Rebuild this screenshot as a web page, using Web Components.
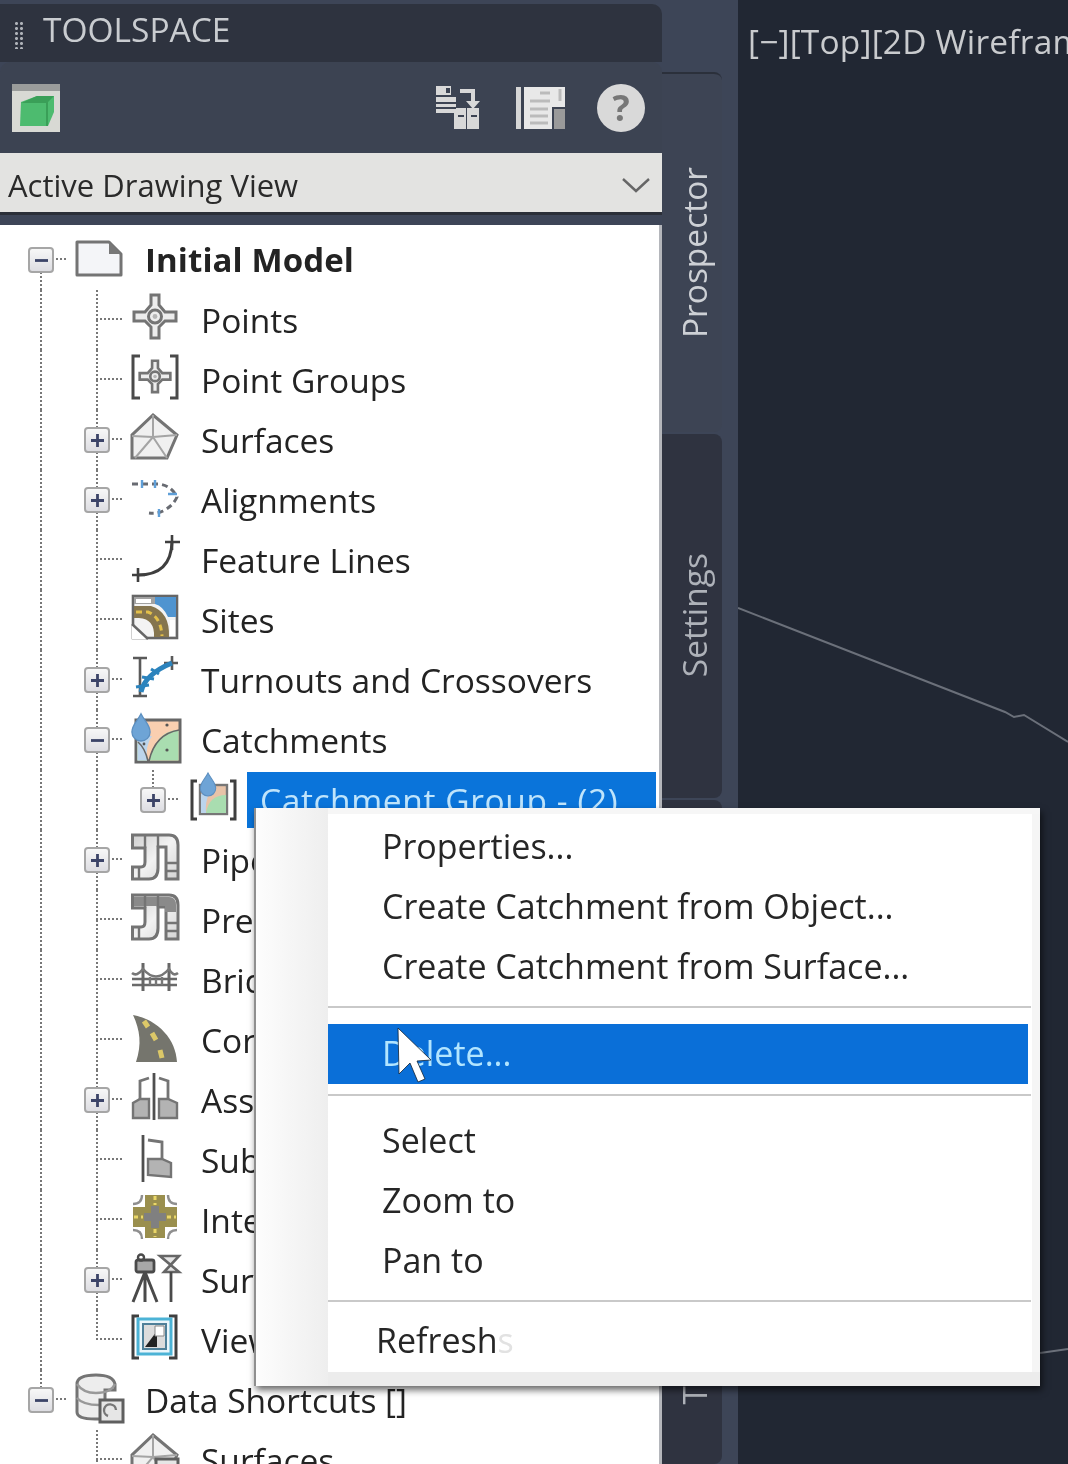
<!DOCTYPE html>
<html><head><meta charset="utf-8">
<style>
html,body{margin:0;padding:0;height:1464px;overflow:hidden;background:#212733}
body{font-family:"Open Sans","Noto Sans",sans-serif}
</style></head>
<body>
<app-shell>
  <tool-space slot="left">
    <space-title>TOOLSPACE</space-title>
    <space-toolbar></space-toolbar>
    <view-combo>Active Drawing View</view-combo>
    <project-tree>
      <tree-row cells="m-d" icon="doc" bold>Initial Model</tree-row>
      <tree-row cells="v b" icon="points">Points</tree-row>
      <tree-row cells="v b" icon="pgroups">Point Groups</tree-row>
      <tree-row cells="v p" icon="surface">Surfaces</tree-row>
      <tree-row cells="v p" icon="align">Alignments</tree-row>
      <tree-row cells="v b" icon="feature">Feature Lines</tree-row>
      <tree-row cells="v b" icon="sites">Sites</tree-row>
      <tree-row cells="v p" icon="turnout">Turnouts and Crossovers</tree-row>
      <tree-row cells="v m" icon="catch">Catchments</tree-row>
      <tree-row cells="v v p-u" icon="catchgroup" selected>Catchment Group - (2)</tree-row>
      <tree-row cells="v p" icon="pipe">Pipe Networks</tree-row>
      <tree-row cells="v b" icon="press">Pressure Networks</tree-row>
      <tree-row cells="v b" icon="bridge">Bridges</tree-row>
      <tree-row cells="v b" icon="corridor">Corridors</tree-row>
      <tree-row cells="v p" icon="assembly">Assemblies</tree-row>
      <tree-row cells="v b" icon="subassembly">Subassemblies</tree-row>
      <tree-row cells="v b" icon="intersect">Intersections</tree-row>
      <tree-row cells="v p" icon="survey">Survey</tree-row>
      <tree-row cells="v e" icon="viewframe">View Frame Groups</tree-row>
      <tree-row cells="m-u" icon="shortcut">Data Shortcuts []</tree-row>
      <tree-row cells="n b" icon="surfaceshort">Surfaces</tree-row>
    </project-tree>
  </tool-space>
  <side-tabs slot="tabs">
    <side-tab active pad="93" h="360">Prospector</side-tab>
    <side-tab pad="119" h="364">Settings</side-tab>
    <side-tab pad="586" h="664">T</side-tab>
  </side-tabs>
  <model-view slot="view">[−][Top][2D Wireframe]</model-view>
  <context-menu slot="over">
    <menu-item>Properties...</menu-item>
    <menu-item>Create Catchment from Object...</menu-item>
    <menu-item>Create Catchment from Surface...</menu-item>
    <menu-sep></menu-sep>
    <menu-item active>Delete...</menu-item>
    <menu-sep short></menu-sep>
    <menu-item>Select</menu-item>
    <menu-item>Zoom to</menu-item>
    <menu-item>Pan to</menu-item>
    <menu-sep></menu-sep>
    <menu-item tight>Refresh<span style="color:#e2e2e2">s</span></menu-item>
  </context-menu>
  <mouse-cursor slot="over"></mouse-cursor>
</app-shell>

<script>
const G='#747474', D='#3f3f3f';
const bracket=(c='#4a4a4a')=>`<path d="M9 4H2V46H9M39 4H46V46H39" fill="none" stroke="${c}" stroke-width="3"/>`;
const target=(t='',w=3)=>`<g ${t}><path d="M20 3H28V13L34 20H45V29H34L28 35V46H20V35L14 29H3V20H14L20 13Z" fill="#ededed" stroke="${G}" stroke-width="${w}"/><circle cx="24" cy="24.5" r="6.5" fill="none" stroke="${G}" stroke-width="${w}"/><circle cx="24" cy="24.5" r="2.4" fill="#b5b5b5"/></g>`;
const pent=`<path d="M22 3L46 23L36 46H1V23Z" fill="#f0f0f0" stroke="${G}" stroke-width="3"/><path d="M22 3V25M1 24L22 25L46 23M22 25L4 46M22 25L36 46" fill="none" stroke="#a4a4a4" stroke-width="2"/>`;
const drop=(x,y,s=1)=>`<path transform="translate(${x} ${y}) scale(${s})" d="M0 -11C3 -5 7 -2 7 3A7 7 0 0 1 -7 3C-7 -2 -3 -5 0 -11Z" fill="#6ea4d6" stroke="#5c8fc0" stroke-width="1"/>`;
const pipe=(top)=>`<defs><linearGradient id="pg" x1="0" y1="0" x2="1" y2="1"><stop offset="0" stop-color="#cfcfcf"/><stop offset=".5" stop-color="#f2f2f2"/><stop offset="1" stop-color="#d4d4d4"/></linearGradient></defs><path d="M1.500 3H38Q47 3 47 13V47H35V15H27V36Q27 47 18 47H1.500V35H10Q14 35 14 30V16H1.500Z" fill="url(#pg)" stroke="${G}" stroke-width="3"/>${top?`<path d="M3 5H38Q45 5 45 13V20H34V14H3Z" fill="#8a8a8a"/>`:''}<path d="M14 3V16M27 3V15M35 31H47M35 39H47M8 35V47" stroke="${G}" stroke-width="2.400" fill="none"/>`;
const ICONS={
doc:`<path d="M2 10H34L46 22V43H2Z" fill="#f4f5f8" stroke="${G}" stroke-width="3" stroke-linejoin="round"/><path d="M34 10L46 22H34Z" fill="#777"/>`,
points:target(),
pgroups:bracket()+target('transform="translate(6.500 6.500) scale(.73)"',3.6),
surface:pent,
align:`<path d="M1 12H27Q40 13 46 25Q42 34 32 39Q26 42 18 41" fill="none" stroke="#686b72" stroke-width="3" stroke-dasharray="6 4"/><path d="M11 8V16M24 8V16M37 22H46M28 37V45" stroke="#5f9fd8" stroke-width="2.400"/>`,
feature:`<path d="M7 43Q40 43 41 10" fill="none" stroke="${D}" stroke-width="3"/><path d="M34 10H49M41 3V18M1 43H14M7 36V50" stroke="${D}" stroke-width="2.600"/>`,
sites:`<rect x="2" y="4" width="44" height="42" fill="#f3f3f3" stroke="#666" stroke-width="2.600"/><path d="M24 5H45V25H37Q32 14 24 12Z" fill="#4f94d0"/><path d="M3 5H24V12H3Z" fill="#a2a2a2"/><path d="M5 7H20V11H5Z" fill="#fff"/><path d="M3 14H20Q39 20 38 45H23Q24 27 8 26H3Z" fill="#85754e"/><path d="M5 20H17Q30 25 31 44" fill="none" stroke="#e3c04a" stroke-width="3" stroke-dasharray="6 4"/><path d="M1 32L17 47H1Z" fill="#fff"/><path d="M1 32L17 47" stroke="#666" stroke-width="2.400"/><path d="M39 28H44V44H39Z" fill="#fff"/>`,
turnout:`<path d="M2 6H16M9 6V44M2 44H16M41 4V18M33 11H47" stroke="#5a5a5a" stroke-width="2.600" fill="none"/><path d="M10 40Q14 22 41 11" fill="none" stroke="#2b83bd" stroke-width="5"/><path d="M5 35L18 33M11 25L23 27M20 17L28 22" stroke="#2b83bd" stroke-width="3"/>`,
catch:`<rect x="5" y="8" width="44" height="42" fill="#f9cfb0" stroke="#666" stroke-width="3"/><path d="M6.500 30V48.500H47.500V18Q26 18 18 48.500Z" fill="#a9ddb0"/><path d="M6.500 24H21Q14 34 16 48.500H6.500Z" fill="#bcd5ec"/><path d="M7 30Q14 36 17 49M18 49Q24 22 48 18" fill="none" stroke="#666" stroke-width="1.600"/>${drop(10,16,1.3)}<circle cx="36" cy="13" r="1.600" fill="#555"/><circle cx="36" cy="38" r="1.600" fill="#555"/><circle cx="13" cy="32" r="1.400" fill="#555"/>`,
catchgroup:`<path d="M10 9H5V47H10M43 9H48V47H43" fill="none" stroke="#3f3f3f" stroke-width="3"/><rect x="13" y="13" width="27" height="29" fill="#e8c3a8" stroke="#777" stroke-width="2.400"/><path d="M14 28V41H39V23Q22 23 19 41Z" fill="#a9ddb0"/><path d="M14 22H22Q18 30 19 41H14Z" fill="#bcd5ec"/>${drop(21,13,1.1)}`,
pipe:pipe(false),press:pipe(true),
bridge:`<path d="M1 27H46M1 33H46" stroke="#6a6a6a" stroke-width="2.600"/><path d="M12 11V39M38 11V39" stroke="#666" stroke-width="3"/><path d="M1 21Q6 25 12 17Q25 32 38 17Q42 25 47 21" fill="none" stroke="#777" stroke-width="2.600"/><path d="M19 25V33M25 27V33M31 25V33" stroke="#777" stroke-width="2.400"/>`,
corridor:`<path d="M2 3C28 8 45 28 46 50H5C11 32 9 18 2 3Z" fill="#75756d"/><path d="M13 9L17 15M21 21L25 28M29 38L31 46" stroke="#dcc868" stroke-width="5"/>`,
assembly:`<path d="M23 1V48" stroke="#4f4f4f" stroke-width="2.800"/><path d="M18 6L9 9V27" fill="none" stroke="${G}" stroke-width="2.800"/><path d="M9 27H18V31H18V46H2V31Z" fill="#b3b3b3" stroke="${G}" stroke-width="2.400"/><path d="M28 6L37 9V27" fill="none" stroke="${G}" stroke-width="2.800"/><path d="M28 27H37L46 31V46H28Z" fill="#b3b3b3" stroke="${G}" stroke-width="2.400"/>`,
subassembly:`<path d="M12 3V50" stroke="#4f4f4f" stroke-width="2.800"/><path d="M17 8L31 10V28" fill="none" stroke="${G}" stroke-width="2.800"/><path d="M17 27H31L40 31V45L17 43Z" fill="#b3b3b3" stroke="${G}" stroke-width="2.400"/>`,
intersect:`<path d="M14 3H34V15H46V35H34V46H14V35H2V15H14Z" fill="#9a8f4e"/><path d="M20 14H28V36H20ZM13 21H35V29H13Z" fill="#808080"/><path d="M24 4V13M24 37V45M3 25H12M36 25H45" stroke="#ead768" stroke-width="3" stroke-dasharray="4 3"/><path d="M11 3Q11 12 2 12M37 3Q37 12 46 12M11 47Q11 38 2 38M37 47Q37 38 46 38" fill="none" stroke="#8f8f8f" stroke-width="2.400"/>`,
survey:`<rect x="5" y="8" width="18" height="12" rx="2" fill="#a8a8a8" stroke="#4a4a4a" stroke-width="2.800"/><circle cx="10" cy="5.500" r="3" fill="none" stroke="#4a4a4a" stroke-width="2.400"/><path d="M14 20L2 50M14 20V50M14 20L26 50" stroke="#4a4a4a" stroke-width="3" fill="none"/><path d="M29 4H48L33 20H48L29 4Z" fill="#e6e6e6" stroke="#666" stroke-width="2.600"/><path d="M40 20V50" stroke="#4a4a4a" stroke-width="2.800"/>`,
viewframe:`<path d="M8 4H2V46H8M38 4H45V46H38" fill="none" stroke="#3f3f3f" stroke-width="3"/><rect x="7" y="7" width="33" height="35" fill="#eaf6fb" stroke="#4cb3d6" stroke-width="3"/><rect x="12" y="12" width="23" height="25" fill="#dcdcdc" stroke="#4f8099" stroke-width="2"/><path d="M14 35L26 35V19Z" fill="#222"/><path d="M24 14H33V24H24Z" fill="#fff" stroke="#888"/>`,
shortcut:`<path d="M2 12V40Q2 47 20 47H30V18H40V12Q38 3 21 3Q2 3 2 12Z" fill="#ededed" stroke="${G}" stroke-width="3"/><path d="M2 12Q8 21 21 21Q36 21 40 12M2 26Q8 33 24 33" fill="none" stroke="#999" stroke-width="2.400"/><rect x="25" y="28" width="23" height="22" fill="#e6e6e6" stroke="#5f5f5f" stroke-width="3"/><path d="M33 44A6 6 0 1 1 41 38" fill="none" stroke="#777" stroke-width="2.400"/>`,
surfaceshort:pent+`<rect x="25" y="27" width="22" height="21" fill="#e6e6e6" stroke="#5f5f5f" stroke-width="3"/>`
};
function def(name,html,setup){
  customElements.define(name,class extends HTMLElement{
    constructor(){super();this.attachShadow({mode:'open'}).innerHTML=typeof html==='function'?html(this):html;}
    connectedCallback(){if(setup)setup(this)}
  });
}
const TXT='"Open Sans","Noto Sans",sans-serif';
def('app-shell',`<style>:host{display:flex;position:relative;width:1068px;height:1464px;overflow:hidden;background:#3d4557;filter:blur(.7px);font-family:${TXT}}
.l{display:block;width:662px;flex:none}.t{display:block;width:60px;flex:none}.gap{width:16px;flex:none;background:#3d4557}.v{flex:1;min-width:0;display:flex}</style>
<div class="l"><slot name="left"></slot></div><div class="t"><slot name="tabs"></slot></div><div class="gap"></div><div class="v"><slot name="view"></slot></div><slot name="over"></slot>`);
def('tool-space',`<style>:host{display:flex;flex-direction:column;height:1464px;padding-top:4px;box-sizing:border-box}</style><slot></slot>`);
def('space-title',`<style>:host{display:flex;align-items:center;height:58px;flex:none;background:#2e333f;border-radius:0 10px 0 0;color:#c9ccd0;font-size:33.5px}
.grip{width:10px;height:28px;margin:4px 19px 0 14px;background:radial-gradient(circle,#aeb2b8 1.3px,transparent 1.6px) 0 0/5px 5px}
span{padding-bottom:8px}</style><div class="grip"></div><span><slot></slot></span>`);
def('space-toolbar',`<style>:host{display:flex;align-items:center;height:91px;flex:none;background:#3c4352;border-radius:10px 10px 0 0;padding:0 17px 0 12px;box-sizing:border-box}
svg{display:block}.sp{flex:1}.i1{margin-right:36px}.i2{margin-right:32px}
.q{width:48px;height:48px;border-radius:50%;background:#d9d9d9;color:#777;font:700 36px/48px ${TXT};text-align:center}</style>
<svg width="48" height="48" viewBox="0 0 48 48"><rect width="48" height="48" fill="#d8d9d4"/><rect width="48" height="7" fill="#9a9c9b"/><path d="M9 18L25 12H42V28L36 42H8Z" fill="#4dbb6f"/><path d="M25 12H42L36 18V42H34V19H9Z" fill="#3a9f58"/></svg>
<div class="sp"></div>
<svg class="i1" width="44" height="46" viewBox="0 0 44 46"><g fill="#d8d8d8"><rect x="0" y="1" width="15" height="9"/><rect x="0" y="12" width="20" height="16"/><rect x="10" y="3" width="4" height="5" fill="#3c4352"/><path d="M24 4H39V16H44L37 24L30 16H35V8H24Z"/><rect x="18" y="23" width="12" height="21"/><rect x="31" y="23" width="12" height="21"/></g><path d="M22 31h6M35 31h6M0 18h20M0 23h20" stroke="#3c4352" stroke-width="2"/></svg>
<svg class="i2" width="49" height="42" viewBox="0 0 49 42"><rect width="5" height="42" fill="#d6d6d6"/><path d="M8 0H49V20H36V42H8Z" fill="#e8e8e8"/><rect x="38" y="22" width="11" height="20" fill="#9a9a9a"/><path d="M14 14H34M14 22H32M14 29H32M14 36H32M24 6H34M44 2V14" stroke="#bbb" stroke-width="3"/></svg>
<div class="q">?</div>`);
def('view-combo',`<style>:host{display:flex;align-items:center;height:62px;flex:none;background:#e3e3e1;border-bottom:3px solid #2b2f38;box-sizing:border-box;padding:5px 12px 0 8px;color:#2a2a2a;font-size:31px;margin-bottom:10px}
span{flex:1}svg{display:block}</style><span><slot></slot></span><svg width="28" height="16" viewBox="0 0 28 16"><path d="M1 2L14 14L27 2" fill="none" stroke="#666" stroke-width="2.400"/></svg>`);
def('project-tree',`<style>:host{display:block;flex:1;background:#fff;border-right:3px solid #b4b6bb;padding-top:5px;overflow:hidden;color:#232323;font-size:33.5px}</style><slot></slot>`);
def('tree-row',h=>{
  const cells=(h.getAttribute('cells')||'').split(' ').map(c=>{
    const up=/^(v|b|e|p|m|p-u|m-u)$/.test(c), down=/^(v|b|p|m|m-d)$/.test(c), hz=/^(b|e|p|m|p-u|m-u|m-d)$/.test(c), box=c[0]==='p'?'+':c[0]==='m'?'−':'';
    return `<div class="c">${up?'<i class="up"></i>':''}${down?'<i class="dn"></i>':''}${hz?'<i class="hz"></i>':''}${box?`<b class="box"><svg width="15" height="15" viewBox="0 0 15 15"><path d="M1 7.500H14${box==='+'?'M7.500 1V14':''}" stroke="#3c4468" stroke-width="2.800"/></svg></b>`:''}</div>`;
  }).join('');
  const icon=ICONS[h.getAttribute('icon')]||'';
  return `<style>:host{display:flex;height:60px;padding-left:13px;align-items:center}
  .c{display:grid;grid-template-columns:29px 27px;grid-template-rows:30px 30px;width:56px;height:60px;flex:none}
  .up,.dn{display:block;width:2px;justify-self:end;grid-column:1;background:repeating-linear-gradient(#777 0 2px,transparent 2px 4px)}.up{grid-row:1}.dn{grid-row:2}
  .hz{display:block;grid-column:2;grid-row:1;height:2px;align-self:end;margin:0 3px 0 2px;background:repeating-linear-gradient(90deg,#777 0 2px,transparent 2px 4px)}
  .box{grid-area:1/1/3/3;justify-self:center;align-self:center;width:26px;height:26px;box-sizing:border-box;border:2.500px solid #a6a6a6;border-radius:4px;background:linear-gradient(#f7f7f7,#dddde2);display:flex;align-items:center;justify-content:center}
  svg.ic{display:block;flex:none;width:48px;height:52px;margin:2px 0 0 6px;align-self:flex-start;overflow:visible}
  .t{margin-left:22px;white-space:nowrap;line-height:60px;${h.hasAttribute('bold')?'font-weight:700;font-size:33px;letter-spacing:.1px;':''}}
  :host([selected]) .t{flex:1;margin:0 3px 0 12px;padding-left:13px;height:56px;line-height:56px;background:#0a74da;color:#bfe4fb;letter-spacing:.6px}</style>
  ${cells}<svg class="ic" viewBox="0 0 48 52">${icon}</svg><div class="t"><slot></slot></div>`;
});
def('side-tabs',`<style>:host{display:flex;flex-direction:column;height:1464px;padding-top:72px;box-sizing:border-box;gap:2px}</style><slot></slot>`);
def('side-tab',h=>`<style>:host{display:flex;justify-content:center;align-items:flex-start;flex:none;box-sizing:border-box;height:${h.getAttribute('h')}px;padding:${h.getAttribute('pad')}px 0 0 4px;background:#2f3340;border-radius:0 8px 8px 0;color:#aeb2b9;font-size:33.5px}
:host([active]){background:#3d4454;border-top:2px solid #2b303b;color:#cdd0d5}
span{writing-mode:vertical-rl;transform:rotate(180deg);line-height:60px;white-space:nowrap}</style><span><slot></slot></span>`);
def('model-view',`<style>:host{display:block;flex:1;position:relative;background:#212733;color:#c9cbce;font-size:33.5px;overflow:hidden;padding:18px 0 0 10px;white-space:nowrap;letter-spacing:.2px}
svg{position:absolute;left:0;top:0}</style><svg width="330" height="1464"><path d="M0 608L267 712L276 717L286 715L330 742M302 1353L330 1349" fill="none" stroke="#6b707a" stroke-width="2"/></svg><slot></slot>`);
def('context-menu',`<style>:host{position:absolute;left:254px;top:808px;width:786px;height:578px;box-sizing:border-box;padding:8px 12px 0 72px;background:linear-gradient(90deg,#fdfdfd,#eeeeee) 0 0/72px 100% no-repeat,linear-gradient(#ececec,#ececec) 0 100%/100% 14px no-repeat,linear-gradient(#f6f6f6,#f6f6f6) 0 0/100% 6px no-repeat,linear-gradient(#f5f5f5,#f5f5f5) 100% 0/8px 100% no-repeat,#fff;border-left:2px solid #8f8f8f;box-shadow:2px 4px 7px rgba(0,0,0,.6);color:#262626;font-size:34px}</style><slot></slot>`);
def('menu-item',`<style>:host{display:block;height:60px;line-height:60px;padding-left:54px;white-space:nowrap}
:host([active]){background:#0a6fd8;color:#b2e5ff;line-height:58px}
:host([tight]){padding-left:48px;margin-top:-8px}</style><slot></slot>`);
def('menu-sep',`<style>:host{display:block;height:2px;background:#c9c9c9;margin:10px -3px 16px 0}:host([short]){margin-bottom:14px}</style>`);
def('mouse-cursor',`<style>:host{position:absolute;left:392px;top:1024px;display:block}svg{display:block}</style><svg width="44" height="62" viewBox="392 1024 44 62"><path d="M398 1028L399 1074L410 1063L418 1082L425 1079L417 1061L431 1060Z" fill="#fff" stroke="#123" stroke-width=".8"/></svg>`);
</script>
</body></html>
